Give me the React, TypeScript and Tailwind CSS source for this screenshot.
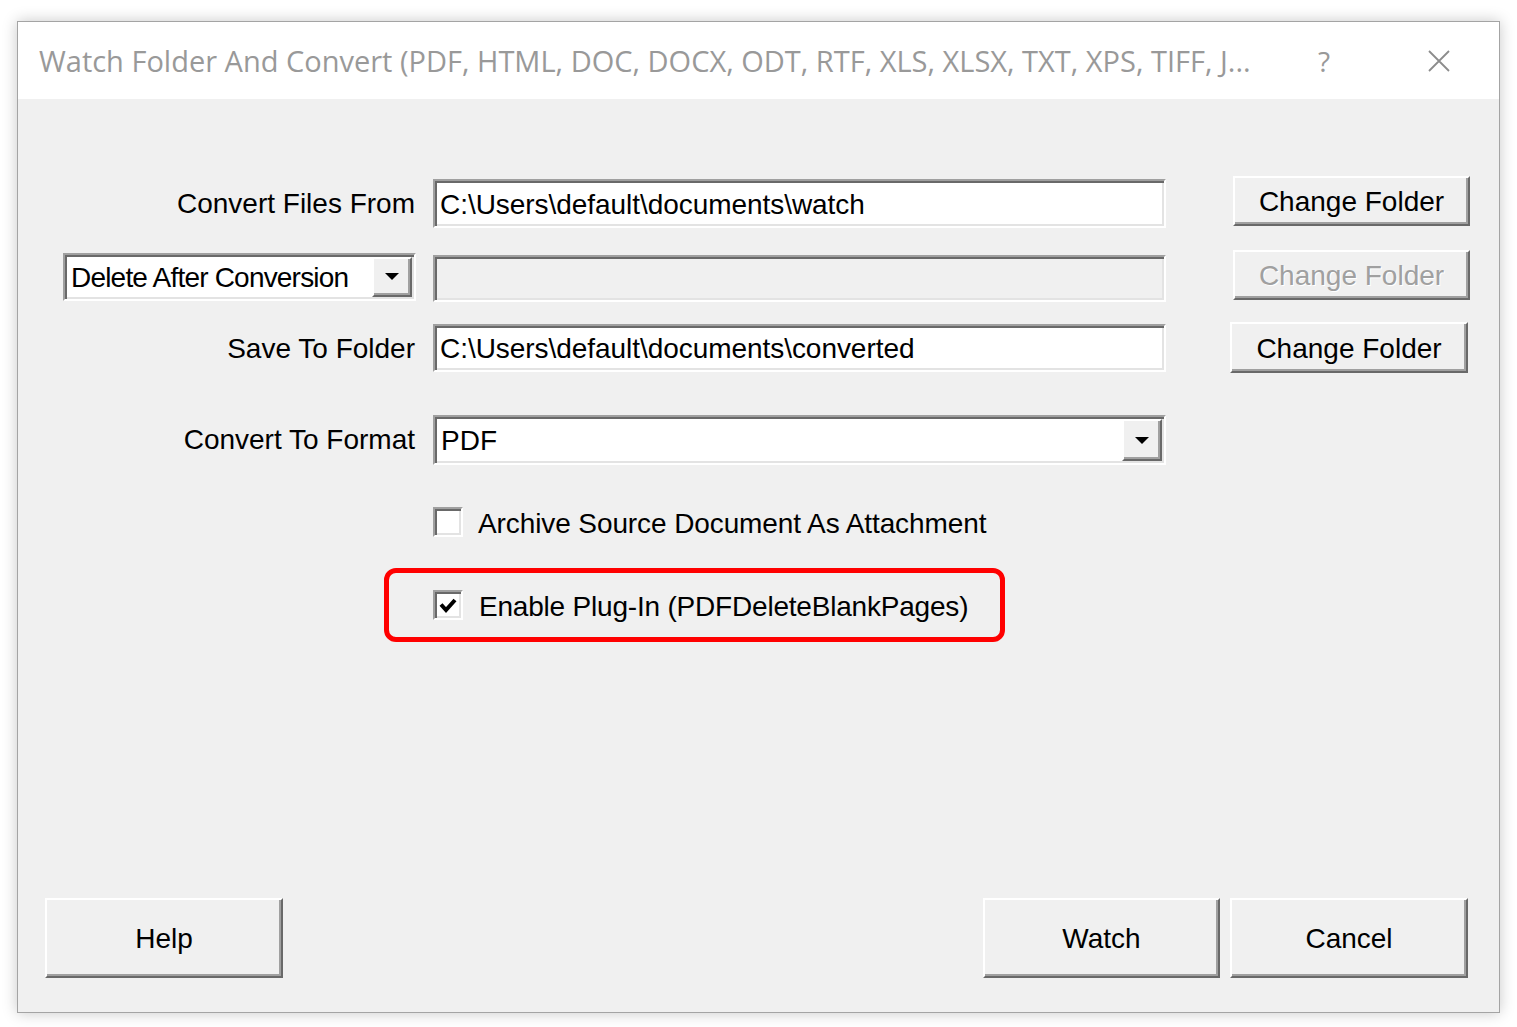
import React from "react";

const font = { fontFamily: '"Liberation Sans", Arial, sans-serif' };

function TextBox({
  value,
  width,
  height,
  disabled,
}: {
  value?: string;
  width: string;
  height: string;
  disabled?: boolean;
}) {
  return (
    <div
      className={`${width} ${height} flex items-center border-2 border-t-[#a0a0a0] border-l-[#a0a0a0] border-b-white border-r-white shadow-[inset_2px_2px_0_#696969,inset_-2px_-2px_0_#e3e3e3] pl-[5px] pt-[2px] text-[28px] leading-none tracking-[-0.05px] text-black ${
        disabled ? "bg-[#f0f0f0]" : "bg-white"
      }`}
    >
      {value}
    </div>
  );
}

function DropArrow() {
  return (
    <div className="flex h-full w-[40px] items-center justify-center border-2 border-t-white border-l-white border-b-[#696969] border-r-[#696969] bg-[#f0f0f0] shadow-[inset_-2px_-2px_0_#a0a0a0]">
      <svg width="16" height="9" viewBox="0 0 16 9">
        <path d="M1 1h14l-7 7z" fill="#000" />
      </svg>
    </div>
  );
}

function Combo({
  value,
  width,
  height,
  tight,
}: {
  value: string;
  width: string;
  height: string;
  tight?: boolean;
}) {
  return (
    <div
      className={`${width} ${height} flex items-stretch border-2 border-t-[#a0a0a0] border-l-[#a0a0a0] border-b-white border-r-white bg-white shadow-[inset_2px_2px_0_#696969,inset_-2px_-2px_0_#e3e3e3] p-[2px]`}
    >
      <div
        className={`flex flex-1 items-center pl-[4px] pt-[2px] text-[28px] leading-none text-black ${
          tight ? "tracking-[-0.8px]" : ""
        }`}
      >
        {value}
      </div>
      <DropArrow />
    </div>
  );
}

function Button({
  label,
  width,
  height,
  disabled,
}: {
  label: string;
  width: string;
  height: string;
  disabled?: boolean;
}) {
  return (
    <div
      className={`${width} ${height} flex items-center justify-center border-2 border-t-white border-l-white border-b-[#696969] border-r-[#696969] bg-[#f0f0f0] pt-[2px] shadow-[inset_-2px_-2px_0_#a0a0a0] text-[28px] leading-none ${
        disabled
          ? "text-[#a0a0a0] [text-shadow:1px_1px_0_#fff]"
          : "text-black"
      }`}
    >
      {label}
    </div>
  );
}

function CheckBox({ checked }: { checked?: boolean }) {
  return (
    <div className="flex h-[30px] w-[30px] items-center justify-center border-2 border-t-[#a0a0a0] border-l-[#a0a0a0] border-b-white border-r-white bg-white shadow-[inset_2px_2px_0_#696969,inset_-2px_-2px_0_#e3e3e3]">
      {checked && (
        <svg width="18" height="16" viewBox="0 0 18 16">
          <path
            d="M2 7.5l5 5.5L16 3"
            fill="none"
            stroke="#000"
            strokeWidth="4"
          />
        </svg>
      )}
    </div>
  );
}

export default function App() {
  return (
    <div className="min-h-screen bg-white pl-[17px] pt-[21px]" style={font}>
      <div className="flex h-[992px] w-[1483px] flex-col border border-[#a4a4a4] shadow-[0_0_14px_rgba(0,0,0,0.22)]">
        {/* title bar */}
        <div className="flex h-[77px] items-center bg-white">
          <div
            className="flex-1 overflow-hidden whitespace-nowrap pl-[21px] text-[29px] text-[#999999]"
            style={{ fontFamily: '"Open Sans", "Noto Sans", sans-serif' }}
          >
            Watch Folder And Convert (PDF, HTML, DOC, DOCX, ODT, RTF, XLS,
            XLSX, TXT, XPS, TIFF, J...
          </div>
          <div
            className="flex w-[90px] justify-center text-[28px] text-[#999999]"
            style={{ fontFamily: '"Open Sans", "Noto Sans", sans-serif' }}
          >
            ?
          </div>
          <div className="ml-[10px] flex w-[120px] justify-center">
            <svg width="24" height="24" viewBox="0 0 24 24">
              <path
                d="M2 2L22 22M22 2L2 22"
                stroke="#8c8c8c"
                strokeWidth="1.8"
              />
            </svg>
          </div>
        </div>

        {/* body */}
        <div className="flex flex-1 flex-col bg-[#f0f0f0] pb-[34px]">
          <div className="mt-[77px] flex h-[52px] items-center">
            <div className="flex w-[398px] justify-end pr-[1px] pt-[3px] text-[28px] text-black">
              Convert Files From
            </div>
            <div className="ml-[17px] mt-[3px]">
              <TextBox
                value="C:\Users\default\documents\watch"
                width="w-[733px]"
                height="h-[49px]"
              />
            </div>
            <div className="ml-[67px] mb-[2px]">
              <Button label="Change Folder" width="w-[237px]" height="h-[50px]" />
            </div>
          </div>

          <div className="mt-[22px] flex h-[53px] items-center">
            <div className="flex w-[398px] justify-end">
              <Combo
                value="Delete After Conversion"
                width="w-[353px]"
                height="h-[48px]"
                tight
              />
            </div>
            <div className="ml-[17px] mt-[4px]">
              <TextBox width="w-[733px]" height="h-[47px]" disabled />
            </div>
            <div className="ml-[67px] mb-[3px]">
              <Button
                label="Change Folder"
                width="w-[237px]"
                height="h-[50px]"
                disabled
              />
            </div>
          </div>

          <div className="mt-[19px] flex h-[51px] items-center">
            <div className="flex w-[398px] justify-end pr-[1px] pt-[2px] text-[28px] text-black">
              Save To Folder
            </div>
            <div className="ml-[17px]">
              <TextBox
                value="C:\Users\default\documents\converted"
                width="w-[733px]"
                height="h-[48px]"
              />
            </div>
            <div className="ml-[64px]">
              <Button label="Change Folder" width="w-[238px]" height="h-[51px]" />
            </div>
          </div>

          <div className="mt-[42px] flex h-[50px] items-center">
            <div className="flex w-[398px] justify-end pr-[1px] text-[28px] text-black">
              Convert To Format
            </div>
            <div className="ml-[17px]">
              <Combo value="PDF" width="w-[733px]" height="h-[50px]" />
            </div>
          </div>

          <div className="ml-[415px] mt-[42px] flex h-[30px] items-center gap-[15px] text-[28px] tracking-[-0.1px] text-black">
            <CheckBox />
            <span className="pt-[3px]">Archive Source Document As Attachment</span>
          </div>

          <div className="ml-[366px] mt-[31px] h-[74px] w-[621px] rounded-[12px] border-[5px] border-[#ff0000] pl-[44px] pt-[17px]">
            <div className="flex h-[30px] items-center gap-[16px] text-[28px] tracking-[-0.2px] text-black">
              <CheckBox checked />
              <span className="pt-[3px]">Enable Plug-In (PDFDeleteBlankPages)</span>
            </div>
          </div>

          <div className="mt-auto flex items-end">
            <div className="ml-[27px]">
              <Button label="Help" width="w-[238px]" height="h-[80px]" />
            </div>
            <div className="ml-auto flex gap-[10px] pr-[31px]">
              <Button label="Watch" width="w-[237px]" height="h-[80px]" />
              <Button label="Cancel" width="w-[238px]" height="h-[80px]" />
            </div>
          </div>
        </div>
      </div>
    </div>
  );
}
